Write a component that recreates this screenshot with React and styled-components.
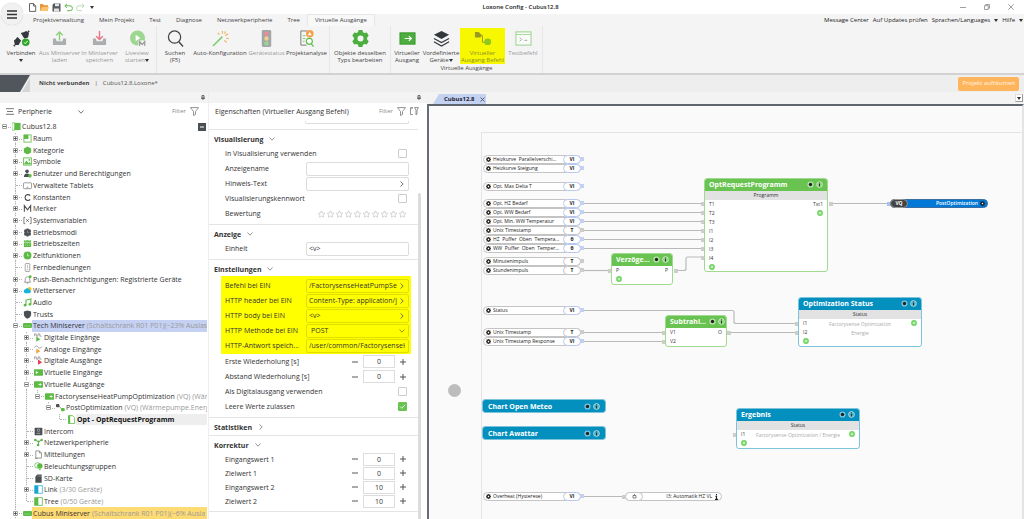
import React from "react";
import styled, { createGlobalStyle, css } from "styled-components";

const GREEN = "#69c350";
const DARK = "#4a4f54";
const BLUE = "#0490bf";

const Global = createGlobalStyle`
  * { box-sizing: border-box; }
  html, body { margin: 0; height: 100%; overflow: hidden; }
  body { font-family: "Open Sans", "Noto Sans", sans-serif; font-size: 7px; line-height: 9px; color: #333; background: #f4f4f4; }
  #root { height: 100%; }
  button, input, select { font: inherit; color: inherit; margin: 0; padding: 0; border: 0; background: none; border-radius: 0; outline: 0; }
  svg { display: block; flex: none; }
  h1, h2, h3, p, ul { margin: 0; padding: 0; font: inherit; list-style: none; }
`;

/* ---------- window frame ---------- */
const Window = styled.div`display: flex; flex-direction: column; height: 100vh;`;
const Top = styled.header`display: flex; flex: none; height: 26px; background: linear-gradient(#fff 14px, #f4f4f4 14px);`;
const MenuButton = styled.button`
  flex: none; width: 22px; height: 22px; margin: 3px 2px 0 1px; border-radius: 50%; background: #f1f1f1;
  box-shadow: 0 0 1px #bbb; display: grid; place-items: center;
`;
const TopRows = styled.div`flex: 1; display: grid; grid-template-rows: 14px 12px; min-width: 0;`;
const TitleRow = styled.div`display: grid; grid-template-columns: 1fr auto 1fr; align-items: center; font-size: 6px; padding-right: 8px;`;
const QuickBar = styled.div`display: flex; gap: 2px; padding-left: 2px;`;
const IconButton = styled.button`display: grid; place-items: center; width: 10px; height: 10px;`;
const Title = styled.h1`font-weight: 600; color: #222;`;
const WindowButtons = styled.div`display: flex; justify-content: flex-end; gap: 14px;`;
const TabRow = styled.div`display: flex; justify-content: space-between; font-size: 6px; padding: 0 1px 0 0;`;
const Tabs = styled.nav`display: flex;`;
const RibbonTab = styled.button`
  padding: 0 7px 0 8px; white-space: nowrap; color: #444;
  ${p => p.$active && css`background: #f8f8f8; border: 1px solid #e6e6e6; border-bottom: 0; padding: 0 7px;`}
`;
const HelpLinks = styled.div`display: flex; align-items: center; gap: 4px; color: #222; white-space: nowrap;`;
const MenuLink = styled.button`display: flex; align-items: center; gap: 4px; font-weight: 500;`;
const Caret = styled.span`
  display: inline-block; border: 2px solid transparent; border-top: 3px solid #333; border-bottom: 0; width: 4px; height: 3px;
`;

/* ---------- ribbon ---------- */
const Ribbon = styled.section`display: flex; flex: none; height: 49px; padding-left: 2px; background: #f4f4f4; border-bottom: 2px solid #d2d2d2;`;
const Group = styled.div`
  display: flex; flex-direction: column; border-right: 1px solid #e6e6e6; padding: 2px 1px 0; font-size: 6px; line-height: 7px;
`;
const GroupItems = styled.div`display: flex; height: 36px;`;
const GroupLabel = styled.div`text-align: center; line-height: 8px; color: #444;`;
const Tool = styled.button`
  width: ${p => p.$w}px; height: 36px; padding-top: 2px; display: flex; flex-direction: column; align-items: center; gap: 3px;
  color: #444; white-space: nowrap; line-height: 7px;
  ${p => p.$off && css`color: #999;`}
  ${p => p.$marked && css`background: #f7f700; color: #8d8f30;`}
`;

/* ---------- project bar ---------- */
const ProjectBar = styled.section`display: flex; flex: none; align-items: center; height: 17px; background: #eee; font-size: 6px; color: #555; padding-right: 5px;`;
const State = styled.strong`margin-left: 8px; color: #444;`;
const Divider = styled.span`margin: 0 5px;`;
const CleanButton = styled.button`margin-left: auto; height: 14px; padding: 0 4px; border-radius: 2px; background: #ffb55c; color: #fff6e8;`;

/* ---------- columns ---------- */
const Columns = styled.main`flex: 1; min-height: 0; display: grid; grid-template-columns: 208px 1px 218px minmax(0, 1fr);`;
const Panel = styled.section`display: flex; flex-direction: column; min-height: 0; overflow: hidden; background: #fff;`;
const Splitter = styled.div`background: #eee;`;
const PinStrip = styled.div`flex: none; height: 11px; background: #f3f3f3; display: flex; justify-content: flex-end; align-items: center; padding-right: ${p => (p.$wide ? 6 : 3)}px;`;
const PanelHead = styled.div`flex: none; height: 17px; display: flex; align-items: center; gap: 4px; padding: 0 ${p => (p.$wide ? 8 : 9)}px 0 6px;`;
const Spacer = styled.span`flex: 1;`;
const FilterText = styled.label`font-size: 6px; color: #888; display: flex; align-items: center; gap: 4px;`;
const ViewSelect = styled.button`display: flex; align-items: center; gap: 26px;`;

/* ---------- tree ---------- */
const Tree = styled.ul`flex: 1; min-height: 0; padding-top: 1px; display: grid; grid-template-rows: repeat(34, minmax(0, 1fr));`;
const TreeRow = styled.li`display: flex; align-items: stretch; white-space: nowrap; min-width: 0; padding-right: 1px;`;
const Guide = styled.span`
  flex: none; width: 11px; position: relative; display: flex; align-items: center;
  background: ${p => (p.$line ? "repeating-linear-gradient(#b5b5b5 0 1px, #e8e8e8 1px 2px) 4px 0 / 1px 100% no-repeat" : "none")};
  ${p => p.$last && css`background-size: 1px 50%;`}
`;
const Branch = styled.span`position: absolute; left: 5px; right: 0; top: 50%; border-top: 1px dotted #b5b5b5;`;
const Expander = styled.button`position: relative; width: 7px; height: 7px; margin-left: 1px; background: #fff;`;
const TreeIcon = styled.span`flex: none; width: 10px; display: grid; place-items: center;`;
const TreeLabel = styled.span`
  flex: 1; min-width: 0; overflow: hidden; display: flex; align-items: center; gap: 2px; padding-left: 1px; color: #333;
  ${p => p.$tone === "blue" && css`background: #c5d1f3;`}
  ${p => p.$tone === "amber" && css`background: #ffdb74;`}
  ${p => p.$tone === "grey" && css`background: #eee; font-weight: 700; color: #111;`}
`;
const Note = styled.span`color: #999;`;
const CollapseAll = styled.button`align-self: center; width: 8px; height: 8px; background: ${DARK}; margin-right: 1px; display: grid; place-items: center;`;

/* ---------- properties ---------- */
const PropsBody = styled.div`flex: 1; min-height: 0; overflow: hidden; display: grid; grid-template-columns: minmax(0, 1fr) 3px; padding: 1px 6px 0 0;`;
const PropsList = styled.div``;
const ScrollTrack = styled.div`padding-top: 72px; background: #fff;`;
const ScrollThumb = styled.div`height: 100%; background: #dcdcdc; border-radius: 2px 2px 0 0;`;
const CutField = styled.div`height: 3px; margin: 0 9px 5px 96px; border: 1px solid #ddd; border-top: 0; border-radius: 0 0 2px 2px;`;
const Section = styled.section`border-top: 1px solid #e4e4e4; padding: 2px 0 ${p => (p.$closed ? 1 : 3)}px;`;
const SectionHead = styled.button`display: flex; align-items: center; gap: 6px; height: 14px; padding-left: 5px; font-weight: 700; color: #333;`;
const Marked = styled.div`background: #ffff00; margin: 0 7px 0 12px; padding: 2px 0 1px;
  & > div { padding-left: 4px; padding-right: 2px; }
  input, select { color: #333; }
`;
const Row = styled.div`
  height: ${p => (p.$dense ? 14 : 15)}px; display: flex; align-items: center; padding: 0 9px 0 16px;
  & > label, & > span:first-child { flex: 1; min-width: 0; white-space: nowrap; }
`;
const Field = styled.div`
  flex: none; display: flex; align-items: center; width: 103px; height: 14px; border: 1px solid ${p => (p.$on ? "#dfe000" : "#dcdcdc")};
  border-radius: 2px; padding: 0 3px 0 2px;
`;
const TextInput = styled.input`flex: 1; min-width: 0; width: 10px; height: 10px;`;
const Choice = styled.select`flex: 1; min-width: 0; appearance: none; height: 12px; padding-left: 2px;`;
const Check = styled.input`
  appearance: none; flex: none; width: 9px; height: 9px; margin-right: 2px; border: 1px solid #ccc; border-radius: 1px; background: #fff;
  &:checked { border-color: ${GREEN}; background: ${GREEN}; }
`;
const CheckWrap = styled.span`display: grid; & > * { grid-area: 1 / 1; } svg { pointer-events: none; place-self: center; margin-right: 2px; }`;
const Stepper = styled.div`display: flex; align-items: center; gap: 4px; padding-right: 2px;`;
const NumberInput = styled.input`width: 32px; height: 13px; border: 1px solid #ddd; text-align: center;`;
const StepButton = styled.button`width: 8px; height: 10px; display: grid; place-items: center;`;
const Stars = styled.div`display: flex; padding-right: 2px;`;

/* ---------- diagram ---------- */
const Editor = styled.section`display: flex; flex-direction: column; min-width: 0; min-height: 0;`;
const EditorTabs = styled.div`flex: none; height: 12px; background: #f3f3f3; display: flex; justify-content: space-between; align-items: stretch; padding: 2px 1px 0 6px;`;
const EditorTab = styled.button`
  display: flex; align-items: center; gap: 5px; width: 53px; padding-left: 11px; font-size: 6px; font-weight: 700; color: #223;
  background: #c4d2f2; clip-path: polygon(6px 0, 100% 0, 100% 100%, 0 100%);
`;
const TabList = styled.button`width: 8px; height: 8px; border: 1px solid #999; border-top-color: #ddd; border-left-color: #ddd; display: grid; place-items: center; background: #fff;`;
const Canvas = styled.div`
  flex: 1; position: relative; overflow: hidden; background: #fafafa; border-left: 2px solid #686c76; border-top: 2px solid #60646c; border-right: 2px solid #e3e3e8;
`;
const Sheet = styled.div`position: absolute; left: 52px; top: 26px; right: 0; bottom: 0; border-left: 1px solid #e4e4e4; border-top: 1px solid #e4e4e4; font-size: 5px; line-height: 7px;`;
const Pointer = styled.div`position: absolute; left: 19px; top: 278px; width: 13px; height: 13px; border-radius: 50%; background: #bdbdbd;`;
const Wires = styled.svg`position: absolute; left: 0; top: 0; width: 100%; height: 100%; overflow: visible;`;
const Placed = styled.div`position: absolute; left: ${p => p.$x}px; top: ${p => p.$y}px; width: ${p => p.$w}px;`;
const Pill = styled(Placed)`
  height: 9px; border: 1px solid #c4c4c4; border-radius: 5px; background: #fff; display: flex; align-items: center;
  padding-left: 2px; gap: 2px; color: #222; white-space: pre;
`;
const PillText = styled.span`flex: 1; min-width: 0; text-align: ${p => p.$align || "left"};`;
const Kind = styled.span`
  flex: none; width: 18px; height: 9px; border: 1px solid ${p => (p.$blue ? "#b9c8ee" : "#c4c4c4")}; border-radius: 5px; background: #fff;
  display: grid; place-items: center; font-weight: 700; margin-right: -1px; color: #222;
`;
const OutPill = styled(Pill)`background: #0078d7; border-color: #3a6ea0; color: #fff; font-weight: 600; padding: 0 2px 0 0;`;
const OutKind = styled(Kind)`background: #444; border-color: #999; color: #fff; margin: 0 0 0 -1px;`;
const StatusPill = styled(Pill)`padding: 0 2px 0 0;`;
const StatusKind = styled(Kind)`margin: 0 0 0 -1px;`;
const Block = styled(Placed)`
  height: ${p => p.$h}px; border: 1px solid ${p => (p.$blue ? "#7cc4dc" : "#a0da90")}; border-radius: 3px; background: #fff; overflow: hidden;
`;
const BlockHead = styled.div`
  height: ${p => (p.$only ? 12 : 13)}px; margin: ${p => (p.$only ? "0" : "-1px -1px 0")}; padding: 0 5px; display: flex; align-items: center;
  justify-content: space-between; gap: 3px; background: ${p => (p.$blue ? BLUE : GREEN)}; color: #fff; font-size: 7px; font-weight: 700; white-space: nowrap;
`;
const HeadIcons = styled.span`display: flex; gap: 2px;`;
const BlockSub = styled.div`height: 9px; background: #e2e2e2; text-align: center; line-height: 9px; color: #333;`;
const Ports = styled.div`display: grid; grid-template-columns: auto 1fr auto; padding: 0 4px;`;
const PortList = styled.div`display: flex; flex-direction: column; line-height: 9px; color: #333; align-items: ${p => (p.$right ? "flex-end" : "flex-start")};`;
const Caption = styled.div`text-align: center; line-height: 9px; color: #aaa; white-space: pre-line; padding-top: 1px;`;

/* ---------- drawings ---------- */
const G = "#5cbb45";
const treeIcons = {
  project: <><rect x="0" y="1" width="3" height="8" fill="#fff" stroke={G} strokeWidth=".7" /><rect x="3" y="1" width="6.5" height="8" fill={G} /></>,
  room: <><rect x="1" y="1" width="8" height="8" fill="#fff" stroke={G} strokeWidth=".9" /><rect x="1" y="1" width="5" height="4.5" fill={G} /></>,
  category: <path d="M5 .5 9 2.8v4.4L5 9.5 1 7.2V2.8z" fill={G} />,
  symbol: <><rect x=".7" y="1" width="8.6" height="8" fill="#fff" stroke={G} /><path d="M1 8 4 4l2 3 1.5-1.5L9 8z" fill={G} /><circle cx="7" cy="3.3" r="1" fill={G} /></>,
  user: <><circle cx="4.5" cy="2.6" r="2" fill={DARK} /><path d="M1 9c0-3 1.5-4 3.5-4S8 6 8 9z" fill={DARK} /><circle cx="7.7" cy="7.6" r="2" fill={G} /></>,
  tablet: <><rect x=".5" y="2" width="9" height="6.5" rx="1" fill="#fff" stroke="#777" strokeWidth=".8" /><path d="M4 7h2" stroke="#777" strokeWidth=".8" /></>,
  constant: <path d="M8 3C6.500 1 2.300 1.300 2.300 5S6.500 9 8 7" fill="none" stroke={DARK} strokeWidth="1.300" />,
  memory: <path d="M1.500 8.500V1.800L5 6.500l3.500-4.700v6.700" fill="none" stroke={DARK} strokeWidth="1.200" />,
  sysvar: <path d="M2.500 1.500H1v7h1.500M7.500 1.500H9v7H7.500M3.500 3.500l3 3M6.500 3.500l-3 3" fill="none" stroke={DARK} strokeWidth=".8" />,
  modes: <><path d="M4 .5h2l.5 1.200 1.500-.2 1 1.700L8.300 5 9 6.800 8 8.500l-1.500-.2L6 9.500H4l-.5-1.200-1.500.2-1-1.700L1.700 5 1 3.200l1-1.700 1.500.2z" fill={DARK} /><path d="M5 3v2.200h1.500" stroke="#aaa" fill="none" strokeWidth=".7" /></>,
  calendar: <><rect x="1" y="1.500" width="8" height="7.500" rx=".5" fill={G} /><path d="M1 3.600h8M3 .6v1.600M7 .6v1.600" stroke="#fff" strokeWidth=".6" /><path d="M2.500 5.200h5M2.500 7h5" stroke="#bfe6b4" strokeWidth=".8" strokeDasharray="1 1" /></>,
  clock: <><circle cx="5" cy="5" r="4.400" fill={G} /><path d="M5 2.500V5.300h2" fill="none" stroke="#d9f3d2" strokeWidth=".8" /></>,
  remote: <><rect x="2.500" y=".6" width="5" height="8.800" rx=".8" fill="#fff" stroke="#888" strokeWidth=".8" /><path d="M5 2v4M4 7.500h2" stroke="#aaa" strokeWidth=".8" /></>,
  bell: <><path d="M1.500 8c1-1 1-2 1-3.500C2.500 3 3.500 2 5 2s2.500 1 2.500 2.500C7.500 6 7.500 7 8.500 8zM4 9h2" fill="#fff" stroke="#777" strokeWidth=".8" /><circle cx="8" cy="2" r="1.600" fill={G} /></>,
  weather: <><circle cx="7.300" cy="3.200" r="2.200" fill="#f6c324" /><path d="M2.500 8a2.200 2.200 0 0 1 0-4.300C3.500 2 6 2 6.500 4 9 4 9.500 7.500 7.500 8z" fill="#12b5dc" /></>,
  audio: <><path d="M3.300 8V2.300L8.800 1v5.800" fill="none" stroke={G} strokeWidth="1.200" /><circle cx="2.300" cy="8" r="1.500" fill={G} /><circle cx="7.700" cy="7" r="1.500" fill={G} /></>,
  trust: <path d="M5 .5 9 1.700v3C9 7.300 7 9 5 9.700 3 9 1 7.300 1 4.700v-3z" fill={DARK} />,
  server: <><rect x="0" y="2.200" width="10" height="5.600" rx="1.200" fill={G} /><path d="M1.500 5.600h7" stroke="#c3e9b9" strokeWidth=".7" strokeDasharray="1.200 .6" /></>,
  digIn: <><path d="M.5 3.500V1h2v2.500h2V1h2v2.500h2" fill="none" stroke="#777" strokeWidth=".7" /><path d="M2.500 4 7 7 2.500 9.800z" fill={G} /></>,
  anaIn: <><path d="M.5 3C2 0 3.500 1 4.500 2.500S7.500 4 9 1.500" fill="none" stroke="#777" strokeWidth=".7" /><path d="M2.500 4 7 7 2.500 9.800z" fill="#f2a33a" /></>,
  digOut: <><path d="M.5 3.500V1h2v2.500h2V1h2v2.500h2" fill="none" stroke="#777" strokeWidth=".7" /><path d="M4.500 4 9 7 4.500 9.800z" fill="#e9374a" /></>,
  virtIn: <><rect x="0" y="1.500" width="10" height="7" rx=".5" fill={G} /><path d="M2 3.200 5 5 2 6.800z" fill="#fff" /></>,
  virtOut: <><rect x="0" y="1.500" width="10" height="7" rx=".5" fill={G} /><path d="M5 5h3M6.500 3.500 8 5 6.500 6.500" fill="none" stroke="#fff" strokeWidth=".9" /></>,
  command: <><rect x="0" y="1" width="3.800" height="3.600" rx="1" fill={DARK} /><path d="M3.500 3.500 6 6.500" stroke="#777" strokeWidth=".8" /><rect x="5.500" y="5.600" width="4.200" height="3.600" rx="1.200" fill={G} /></>,
  page: <><path d="M1.700.7h4.500L8.500 3v6.500H1.700z" fill="#fff" stroke={G} strokeWidth=".9" /><path d="M1.500.5h2v9h-2z" fill={G} /></>,
  intercom: <><rect x=".7" y=".7" width="8.600" height="8.600" rx="1" fill={DARK} /><circle cx="5" cy="3.600" r="1.400" fill="none" stroke="#ccc" strokeWidth=".7" /><path d="M3 7h4" stroke="#ccc" strokeWidth=".8" /></>,
  network: <><path d="M1.500 2.500 5 4l3.500-1.500M5 4v4" fill="none" stroke={DARK} strokeWidth=".7" /><circle cx="1.500" cy="2.300" r="1.400" fill={G} /><circle cx="8.500" cy="2.300" r="1.400" fill={G} /><circle cx="4.500" cy="7.800" r="1.500" fill={G} /><circle cx="5" cy="4" r="1.300" fill={G} /></>,
  message: <path d="M2 1h4l2.300 2.300V9H2zM6 1v2.300h2.300M1 9.300h3" fill="#fff" stroke="#777" strokeWidth=".8" />,
  light: <><circle cx="3.800" cy="3.800" r="3" fill="#fff" stroke={G} strokeWidth=".8" /><circle cx="6.500" cy="4.500" r="3" fill={G} /><path d="M5.500 8.500h2" stroke={G} /></>,
  sd: <><path d="M3.500.6h5v9h-7V3z" fill={DARK} /><path d="M4.500 1.500v1.600M6 1.500v1.600M7.400 1.500v1.600" stroke="#aaa" strokeWidth=".6" /></>,
  link: <><rect x=".8" y=".8" width="8.400" height="8.400" fill="#fff" stroke="#35b2d8" strokeWidth=".9" /><rect x=".8" y=".8" width="4" height="8.400" fill="#17a6d4" /></>,
  tree: <><rect x=".8" y=".8" width="8.400" height="8.400" fill="#fff" stroke={G} strokeWidth=".9" /><rect x=".8" y=".8" width="4" height="8.400" fill={G} /></>,
};
const Pic = ({ name }) => <svg width="9" height="9" viewBox="0 0 10 10">{treeIcons[name]}</svg>;

const toolIcons = {
  connect: <><path d="M1 11l4-3 3 4-2 4H2zM10 3l4-2 3 2-1 5-4 1-2-3z" fill="#34393e" /><path d="M4 8l4 4M9 3l5 5M2 16l-1 1M16 2l1-1" stroke="#34393e" strokeWidth="2" /><circle cx="13.500" cy="13" r="4" fill="#2fa52a" /><path d="M11.600 13l1.400 1.500 2.500-3" fill="none" stroke="#fff" strokeWidth="1" /></>,
  load: <><path d="M2 9h3l1 3h6l1-3h3v6a1 1 0 0 1-1 1H3a1 1 0 0 1-1-1z" fill="#aaaeb0" /><path d="M9 11V2M5.500 5.500 9 2l3.500 3.500" fill="none" stroke="#8fd07f" strokeWidth="1.500" /></>,
  save: <><path d="M2 9h3l1 3h6l1-3h3v6a1 1 0 0 1-1 1H3a1 1 0 0 1-1-1z" fill="#aaaeb0" /><path d="M9 1v9M5.500 6.500 9 10l3.500-3.500" fill="none" stroke="#ec7483" strokeWidth="1.500" /></>,
  live: <><circle cx="9" cy="8.500" r="8" fill="#9dd690" /><path d="M7 5l5 3.500L7 12z" fill="#fff" /><path d="M10 11h8v7h-8z" fill="#f4f4f4" /><path d="M11.300 17v-5l2.700 3.500 2.700-3.500v5" fill="none" stroke="#999" strokeWidth="1.200" /></>,
  search: <><circle cx="8" cy="7.500" r="6.500" fill="none" stroke="#444" strokeWidth="1.300" /><path d="M12.500 12.500 17 17.500" stroke="#444" strokeWidth="1.500" /></>,
  wand: <><path d="M1 17 11 7" stroke="#7ccc6b" strokeWidth="1.600" /><path d="M11 1v3M14 1.500l-.5 2.500M6 3l2 2M14 6l3-2M15 9h3M13 11l2.500 2" stroke="#f0b25a" strokeWidth="1.200" /></>,
  lights: <><rect x="4" y="0" width="10" height="18" rx="1.500" fill="#a2a6a8" /><circle cx="9" cy="3.800" r="2.300" fill="#f08a93" /><circle cx="9" cy="9" r="2.300" fill="#f5cd8d" /><circle cx="9" cy="14.200" r="2.300" fill="#9ad68b" /></>,
  analysis: <><path d="M10 1H3v15h6" fill="none" stroke="#777" /><path d="M5 6h3M5 9h3M5 12h2" stroke="#7ccc6b" /><circle cx="12.500" cy="4" r="4" fill="#f5a04c" /><path d="M12.500 2 14.500 5.500h-4z" fill="#fff" /><circle cx="12" cy="12" r="3.200" fill="#fff" stroke="#5cbb45" strokeWidth="1.200" /><path d="M14 14.500l2.500 3" stroke="#5cbb45" strokeWidth="1.200" /></>,
  gear: <path fillRule="evenodd" d="M7 0h4l.7 2.400 1.600.9 2.400-.7 2 3.500L16 8v2l1.700 1.900-2 3.500-2.400-.6-1.600.9L11 18H7l-.7-2.300-1.600-.9-2.400.6-2-3.500L2 10V8L.3 6.100l2-3.500 2.400.7 1.600-.9zM9 5.800a3.200 3.200 0 1 0 0 6.400 3.200 3.200 0 0 0 0-6.400z" fill="#4cae3e" />,
  output: <><rect x="1" y="3" width="16" height="12" fill="#4cae3e" stroke="#3a9630" /><path d="M6 9h7M10.500 6.500 13 9l-2.500 2.500" fill="none" stroke="#fff" strokeWidth="1.300" /></>,
  layers: <><path d="M9 1l8 4-8 4.500L1 5z" fill="#33383d" /><path d="M1 9l8 4.300L17 9M1 12.500l8 4.500 8-4.500" fill="none" stroke="#33383d" strokeWidth="1.200" /></>,
  command: <><path d="M1 2h4l3 3-1 3H1z" fill="#999c22" /><path d="M7 6h2v7h3" fill="none" stroke="#999c22" /><rect x="11" y="9" width="7" height="7" rx="3" fill="#8fc81f" /></>,
  test: <><rect x="1" y="2" width="16" height="14" fill="#f9fcf8" stroke="#a3d798" strokeWidth="1.200" /><path d="M1 4.800h16" stroke="#a3d798" /><path d="M5 8l2 2-2 2M10 11h3" fill="none" stroke="#a3aaa3" /></>,
};

const Chevron = ({ dir = "down", color = "#666" }) => (
  <svg width="6" height="6" viewBox="0 0 6 6"><path d={dir === "down" ? "M.5 1.500 3 4.200 5.500 1.500" : "M1.500.5 4.200 3 1.500 5.500"} fill="none" stroke={color} strokeWidth=".9" /></svg>
);
const Funnel = () => <svg width="9" height="9" viewBox="0 0 9 9"><path d="M.5.6h8L5.500 4.500V7.500l-2 1v-4z" fill="none" stroke="#777" strokeWidth=".8" /></svg>;
const Pin = () => <svg width="4" height="5" viewBox="0 0 4 5"><path d="M1 .6h2v2.600H1zM0 3.300h4M2 3.300V5" fill="none" stroke="#555" strokeWidth=".9" /></svg>;
const Sign = ({ plus }) => <svg width="6" height="6" viewBox="0 0 6 6"><path d={plus ? "M0 3h6M3 0v6" : "M0 3h6"} stroke="#444" strokeWidth=".9" /></svg>;
const Star = () => <svg width="9" height="8" viewBox="0 0 9 8"><path d="M4.500.8l1 2.200 2.300.3-1.700 1.600.4 2.300-2-1.100-2 1.100.4-2.300L1.200 3.300 3.500 3z" fill="none" stroke="#bbb" strokeWidth=".6" /></svg>;
const Box = ({ plus }) => <svg width="7" height="7" viewBox="0 0 7 7"><path d="M1.500 1.500h4v4h-4z" fill="#fff" stroke="#a5a5a5" /><path d={plus ? "M2 3.500h3M3.500 2v3" : "M2 3.500h3"} stroke="#444" strokeWidth=".8" /></svg>;
const Cog = ({ color = "#222" }) => <svg width="5" height="5" viewBox="0 0 6 6"><circle cx="3" cy="3" r="1.900" fill="none" stroke={color} strokeWidth="1.500" /><path d="M3 0v6M0 3h6M.9.9l4.200 4.200M5.100.9.9 5.100" stroke={color} strokeWidth=".8" /><circle cx="3" cy="3" r=".8" fill="#fff" /></svg>;
const Plus = () => <svg width="6" height="9" viewBox="0 0 6 9"><circle cx="3" cy="4" r="2.900" fill="#6ed35e" /><path d="M1.500 4h3M3 2.500v3" stroke="#e9fbe6" strokeWidth=".8" /></svg>;
const HeadPics = ({ blue }) => (
  <HeadIcons>
    <svg width="7" height="7" viewBox="0 0 7 7"><circle cx="3.500" cy="3.500" r="3.100" fill={blue ? "#7cc4dc" : "#b5e3aa"} /><circle cx="3.500" cy="3.500" r="1.700" fill="#222" /></svg>
    <svg width="7" height="7" viewBox="0 0 7 7"><circle cx="3.500" cy="3.500" r="2.900" fill={blue ? "#4aabcb" : "#8ed07d"} stroke="#d8efe0" strokeWidth=".7" /><path d="M3.500 1.500v.9M3.500 3v2.500" stroke="#222" strokeWidth=".9" /></svg>
  </HeadIcons>
);

/* ---------- data ---------- */
const groups = [
  { items: [
    [36, "connect", "Verbinden", "", { caret: true }],
    [41, "load", "Aus Miniserver", "laden", { off: true }],
    [39, "save", "In Miniserver", "speichern", { off: true }],
    [36, "live", "Liveview", "starten", { off: true, caret: true }],
  ] },
  { items: [
    [34, "search", "Suchen", "(F5)", {}],
    [56, "wand", "Auto-Konfiguration", "", {}],
    [37, "lights", "Gerätestatus", "", { off: true }],
    [43, "analysis", "Projektanalyse", "", {}],
  ] },
  { items: [[58, "gear", "Objekte desselben", "Typs bearbeiten", {}]] },
  { label: "Virtuelle Ausgänge", items: [
    [30, "output", "Virtueller", "Ausgang", {}],
    [38, "layers", "Vordefinierte", "Geräte", { caret: true }],
    [45, "command", "Virtueller", "Ausgang Befehl", { marked: true }],
    [36, "test", "Testbefehl", "", { off: true }],
  ] },
];

// depth, icon, label, expander state ("+", "-" or none), extras
const nodes = [
  [0, "project", "Cubus12.8", "-", { collapse: true }],
  [1, "room", "Raum", "+"],
  [1, "category", "Kategorie", "+"],
  [1, "symbol", "Symbole", "+"],
  [1, "user", "Benutzer und Berechtigungen", "+"],
  [1, "tablet", "Verwaltete Tablets", ""],
  [1, "constant", "Konstanten", "+"],
  [1, "memory", "Merker", "+"],
  [1, "sysvar", "Systemvariablen", "+"],
  [1, "modes", "Betriebsmodi", "+"],
  [1, "calendar", "Betriebszeiten", "+"],
  [1, "clock", "Zeitfunktionen", "+"],
  [1, "remote", "Fernbedienungen", ""],
  [1, "bell", "Push-Benachrichtigungen: Registrierte Geräte", "+"],
  [1, "weather", "Wetterserver", "+"],
  [1, "audio", "Audio", ""],
  [1, "trust", "Trusts", ""],
  [1, "server", "Tech Miniserver", "-", { note: "(Schaltschrank R01 P01)(~23% Auslas", tone: "blue" }],
  [2, "digIn", "Digitale Eingänge", "+"],
  [2, "anaIn", "Analoge Eingänge", "+"],
  [2, "digOut", "Digitale Ausgänge", "+"],
  [2, "virtIn", "Virtuelle Eingänge", "+"],
  [2, "virtOut", "Virtuelle Ausgänge", "-"],
  [3, "virtOut", "FactorysenseHeatPumpOptimization", "-", { note: "(VQ) (Wär", last: true }],
  [4, "command", "PostOptimization", "-", { note: "(VQ) (Wärmepumpe.Energ", last: true }],
  [5, "page", "Opt - OptRequestProgramm", "", { tone: "grey", last: true }],
  [2, "intercom", "Intercom", ""],
  [2, "network", "Netzwerkperipherie", "+"],
  [2, "message", "Mitteilungen", "+"],
  [2, "light", "Beleuchtungsgruppen", ""],
  [2, "sd", "SD-Karte", ""],
  [2, "link", "Link", "+", { note: "(3/30 Geräte)" }],
  [2, "tree", "Tree", "", { note: "(0/50 Geräte)", last: true }],
  [1, "server", "Cubus Miniserver", "+", { note: "(Schaltschrank R01 P01)(~6% Ausla", tone: "amber" }],
];

const inputs = [
  [22, "Heizkurve  Parallelverschi...", "VI"],
  [31, "Heizkurve Steigung", "VI"],
  [49, "Opt. Max Delta T", "VI"],
  [66, "Opt. HZ Bedarf", "VI"],
  [75, "Opt. WW Bedarf", "VI"],
  [84, "Opt. Min. WW Temperatur", "VI"],
  [93, "Unix Timestamp", "T"],
  [102, "HZ  Puffer  Oben  Tempera...", "θ"],
  [111, "WW  Puffer  Oben  Temper...", "θ"],
  [124, "Minutenimpuls", "T"],
  [133, "Stundenimpuls", "T"],
  [173, "Status", "VI"],
  [195, "Unix Timestamp", "T"],
  [204, "Unix Timestamp Response", "VI"],
  [359, "Overheat (Hysterese)", "VI"],
];
const wires = [
  "M102 70.500H221", "M102 79.500H221", "M102 88.500H221", "M102 97.500H221", "M102 106.500H221", "M102 115.500H221",
  "M102 137.500H128", "M193 137.500H202q2 0 2-2V126q0-2 2-2H221", "M350 70.500H406",
  "M102 177.500H250q2 0 2 2V188.500q0 2 2 2H315", "M102 199.500H182", "M102 208.500H182", "M247 199.500H315", "M102 363.500H140",
];
const greyPorts = [
  ...[69, 78, 87, 96, 105, 114, 123].map(y => [219, y]), [347, 69], [126, 136], [192, 136], [180, 198], [180, 207], [245, 198],
  [313, 189], [313, 198], [251, 300], [140, 362],
];

/* ---------- views ---------- */
function RibbonView() {
  return (
    <Ribbon>
      {groups.map((g, i) => (
        <Group key={i}>
          <GroupItems>
            {g.items.map(([w, icon, a, b, o]) => (
              <Tool key={icon} $w={w} $off={o.off} $marked={o.marked}>
                <svg width="17" height="17" viewBox="0 0 18 18">{toolIcons[icon]}</svg>
                <span>{a}<br />{b}{o.caret && <Caret />}</span>
              </Tool>
            ))}
          </GroupItems>
          {g.label && <GroupLabel>{g.label}</GroupLabel>}
        </Group>
      ))}
    </Ribbon>
  );
}

function TreeView() {
  return (
    <Tree>
      {nodes.map(([depth, icon, label, exp, o = {}], i) => (
        <TreeRow key={i}>
          {Array.from({ length: depth }, (_, c) => <Guide key={c} $line={c === 1 || c === 2} />)}
          <Guide $line={depth > 0} $last={o.last}>
            <Branch />
            {exp && <Expander aria-label={label}><Box plus={exp === "+"} /></Expander>}
          </Guide>
          <TreeIcon><Pic name={icon} /></TreeIcon>
          <TreeLabel $tone={o.tone}>{label}{o.note && <Note>{o.note}</Note>}</TreeLabel>
          {o.collapse && <CollapseAll aria-label="Alle einklappen"><svg width="4" height="4" viewBox="0 0 4 4"><path d="M0 2h4" stroke="#fff" /></svg></CollapseAll>}
        </TreeRow>
      ))}
    </Tree>
  );
}

const FieldRow = ({ id, label, value = "", arrow, on }) => (
  <Row><label htmlFor={id}>{label}</label>
    <Field $on={on}><TextInput id={id} defaultValue={value} />{arrow && <button aria-label={label}><Chevron dir="right" /></button>}</Field>
  </Row>
);
const CheckRow = ({ id, label, checked }) => (
  <Row><label htmlFor={id}>{label}</label>
    <CheckWrap><Check type="checkbox" id={id} defaultChecked={checked} />
      {checked && <svg width="7" height="7" viewBox="0 0 7 7"><path d="M1 3.500 2.800 5.300 6 1.800" fill="none" stroke="#fff" strokeWidth=".8" /></svg>}
    </CheckWrap>
  </Row>
);
const StepRow = ({ id, label, value, dense }) => (
  <Row $dense={dense}><label htmlFor={id}>{label}</label>
    <Stepper>
      <StepButton aria-label="weniger"><Sign /></StepButton>
      <NumberInput id={id} defaultValue={value} />
      <StepButton aria-label="mehr"><Sign plus /></StepButton>
    </Stepper>
  </Row>
);
const Head = ({ children, closed }) => <SectionHead>{children}<Chevron dir={closed ? "right" : "down"} color="#888" /></SectionHead>;

function Properties() {
  return (
    <PropsBody>
      <PropsList>
        <CutField />
        <Section>
          <Head>Visualisierung</Head>
          <CheckRow id="vis" label="In Visualisierung verwenden" />
          <FieldRow id="name" label="Anzeigename" />
          <FieldRow id="hint" label="Hinweis-Text" arrow />
          <CheckRow id="pw" label="Visualisierungskennwort" />
          <Row><span>Bewertung</span><Stars>{Array.from({ length: 10 }, (_, i) => <Star key={i} />)}</Stars></Row>
        </Section>
        <Section>
          <Head>Anzeige</Head>
          <FieldRow id="unit" label="Einheit" value="<v>" />
        </Section>
        <Section>
          <Head>Einstellungen</Head>
          <Marked>
            <FieldRow on id="cmd" label="Befehl bei EIN" value="/FactorysenseHeatPumpSe" arrow />
            <FieldRow on id="header" label="HTTP header bei EIN" value="Content-Type: application/j" arrow />
            <FieldRow on id="body" label="HTTP body bei EIN" value="<v>" arrow />
            <Row><label htmlFor="method">HTTP Methode bei EIN</label>
              <Field $on><Choice id="method"><option>POST</option></Choice><Chevron color="#888800" /></Field>
            </Row>
            <FieldRow on id="answer" label="HTTP-Antwort speich..." value="/user/common/FactorysenseH" />
          </Marked>
          <StepRow id="first" label="Erste Wiederholung [s]" value="0" />
          <StepRow id="gap" label="Abstand Wiederholung [s]" value="0" />
          <CheckRow id="digital" label="Als Digitalausgang verwenden" />
          <CheckRow id="empty" label="Leere Werte zulassen" checked />
        </Section>
        <Section $closed><Head closed>Statistiken</Head></Section>
        <Section>
          <Head>Korrektur</Head>
          <StepRow dense id="in1" label="Eingangswert 1" value="0" />
          <StepRow dense id="out1" label="Zielwert 1" value="0" />
          <StepRow dense id="in2" label="Eingangswert 2" value="10" />
          <StepRow dense id="out2" label="Zielwert 2" value="10" />
        </Section>
        <Section />
      </PropsList>
      <ScrollTrack><ScrollThumb /></ScrollTrack>
    </PropsBody>
  );
}

function FunctionBlock({ x, y, w, h, blue, title, sub, left = [], right = [], caption }) {
  return (
    <Block $x={x} $y={y} $w={w} $h={h} $blue={blue}>
      <BlockHead $blue={blue} $only={!left.length}><span>{title}</span><HeadPics blue={blue} /></BlockHead>
      {sub && <BlockSub>{sub}</BlockSub>}
      {left.length > 0 && (
        <Ports>
          <PortList>{left.map(t => (t === "+" ? <Plus key={t} /> : <span key={t}>{t}</span>))}</PortList>
          <Caption>{caption}</Caption>
          <PortList $right>{right.map(t => (t === "+" ? <Plus key={t} /> : <span key={t}>{t}</span>))}</PortList>
        </Ports>
      )}
    </Block>
  );
}

function Diagram() {
  return (
    <Canvas>
      <Pointer />
      <Sheet>
        <Wires>
          {wires.map(d => <path key={d} d={d} fill="none" stroke="#b9b9b9" strokeWidth="1.200" />)}
          {greyPorts.map(([x, y]) => <rect key={`${x}-${y}`} x={x} y={y} width="4" height="4" fill="#cfcdc8" />)}
          {inputs.map(([y, , kind]) => <rect key={y} x="98" y={y + 2} width="4" height="4" fill={kind === "T" ? "#cfcdc8" : "#c3d1f4"} />)}
          <rect x="405" y="69" width="4" height="4" fill="#a9c3f0" />
        </Wires>
        {inputs.map(([y, text, kind]) => (
          <Pill key={y} $x={1} $y={y} $w={98}><Cog /><PillText>{text}</PillText><Kind $blue={kind !== "T"}>{kind}</Kind></Pill>
        ))}
        <FunctionBlock x={222} y={45} w={124} h={94} title="OptRequestProgramm" sub="Programm"
          left={["T1", "T2", "T3", "I1", "I2", "I3", "I4", "+"]} right={["Txt1", "+"]} />
        <FunctionBlock x={129} y={120} w={62} h={32} title="Verzöge..." left={["P", "+"]} right={["P"]} />
        <FunctionBlock x={183} y={182} w={62} h={32} title="Subtrahi..." left={["V1", "V2"]} right={["O"]} />
        <FunctionBlock blue x={316} y={164} w={124} h={50} title="Optimization Status" sub="Status"
          left={["I1", "I2", "+"]} right={["+"]} caption={"Factorysense Optimization\nEnergie"} />
        <FunctionBlock blue x={0} y={266} w={124} h={14} title="Chart Open Meteo" />
        <FunctionBlock blue x={0} y={293} w={124} h={14} title="Chart Awattar" />
        <FunctionBlock blue x={254} y={275} w={124} h={41} title="Ergebnis" sub="Status"
          left={["I1", "+"]} right={["+"]} caption="Factorysense Optimization / Energie" />
        <OutPill $x={408} $y={66} $w={98}><OutKind>VQ</OutKind><PillText $align="right">PostOptimization</PillText><Cog /></OutPill>
        <StatusPill $x={143} $y={359} $w={97}>
          <StatusKind><svg width="5" height="5" viewBox="0 0 5 5"><path d="M1 1.500h3v2.500H1zM2.500 1.500V0" fill="none" stroke="#555" strokeWidth=".7" /></svg></StatusKind>
          <PillText $align="right">I3: Automatik HZ VL</PillText>
          <svg width="5" height="6" viewBox="0 0 5 6"><path d="M2.500 0v1.300M1.500 2.400h1v3M1 5.400h3" fill="none" stroke="#222" strokeWidth="1.100" /></svg>
        </StatusPill>
      </Sheet>
    </Canvas>
  );
}

export default function App() {
  return (
    <Window>
      <Global />
      <Top>
        <MenuButton aria-label="Menü"><svg width="10" height="9" viewBox="0 0 10 9"><path d="M0 1h10M0 4.500h10M0 8h10" stroke="#333" strokeWidth="1.300" /></svg></MenuButton>
        <TopRows>
          <TitleRow>
            <QuickBar>
              <IconButton aria-label="Neu"><svg width="9" height="9" viewBox="0 0 9 9"><path d="M1.500.6h4L7.700 3v5.400H1.500zM5.500.6V3h2.200" fill="none" stroke="#555" strokeWidth=".9" /></svg></IconButton>
              <IconButton aria-label="Öffnen"><svg width="9" height="9" viewBox="0 0 9 9"><path d="M0 1h3l1 1.300h4V8H0z" fill="#e8973a" /><path d="M2 4h7L7.500 8H0z" fill="#fbc46f" /></svg></IconButton>
              <IconButton aria-label="Speichern"><svg width="9" height="9" viewBox="0 0 9 9"><path d="M1.500.5h7v8h-8V2z" fill="#555a5f" /><path d="M3 .8h4v2.500H3zM2 5.500h5v3H2z" fill="#e4e4e4" /></svg></IconButton>
              <IconButton aria-label="Rückgängig"><svg width="9" height="9" viewBox="0 0 9 9"><path d="M3 .8.8 2.800 3 5M1 2.800h5a2.400 2.400 0 0 1 0 4.900H3" fill="none" stroke="#69b858" strokeWidth="1" /></svg></IconButton>
              <IconButton aria-label="Wiederholen"><svg width="9" height="9" viewBox="0 0 9 9"><path d="M6 .8l2.200 2L6 5M8 2.800H3a2.400 2.400 0 0 0 0 4.900h3" fill="none" stroke="#b9dfb0" strokeWidth="1" /></svg></IconButton>
              <IconButton aria-label="Mehr"><Caret /></IconButton>
            </QuickBar>
            <Title>Loxone Config - Cubus12.8</Title>
            <WindowButtons>
              <IconButton aria-label="Minimieren"><svg width="6" height="6" viewBox="0 0 6 6"><path d="M0 3.500h6" stroke="#888" strokeWidth=".8" /></svg></IconButton>
              <IconButton aria-label="Verkleinern"><svg width="6" height="6" viewBox="0 0 6 6"><path d="M.5 1.700h3.800v3.800H.5zM1.700 1.500V.5h3.800v3.800h-1" fill="none" stroke="#888" strokeWidth=".8" /></svg></IconButton>
              <IconButton aria-label="Schließen"><svg width="6" height="6" viewBox="0 0 6 6"><path d="M.3.3l5.400 5.400M5.700.3.3 5.700" stroke="#888" strokeWidth=".8" /></svg></IconButton>
            </WindowButtons>
          </TitleRow>
          <TabRow>
            <Tabs>
              {["Projektverwaltung", "Mein Projekt", "Test", "Diagnose", "Netzwerkperipherie", "Tree", "Virtuelle Ausgänge"].map((t, i) => (
                <RibbonTab key={t} $active={i === 6}>{t}</RibbonTab>
              ))}
            </Tabs>
            <HelpLinks>
              <MenuLink>Message Center</MenuLink>
              <MenuLink>Auf Updates prüfen</MenuLink>
              <MenuLink>Sprachen/Languages <Caret /></MenuLink>
              <MenuLink>Hilfe <Caret /></MenuLink>
            </HelpLinks>
          </TabRow>
        </TopRows>
      </Top>
      <RibbonView />
      <ProjectBar>
        <svg width="31" height="17" viewBox="0 0 31 17"><path d="M22 17 30 3v14z" fill="#d5d5d5" /><path d="M0 0h30L20 17H0z" fill="#50565b" /></svg>
        <State>Nicht verbunden</State><Divider>|</Divider><span>Cubus12.8.Loxone*</span>
        <CleanButton>Projekt aufräumen</CleanButton>
      </ProjectBar>
      <Columns>
        <Panel>
          <PinStrip><Pin /></PinStrip>
          <PanelHead>
            <svg width="8" height="7" viewBox="0 0 8 7"><path d="M0 .7h8M1 3.500h6M0 6.300h8" stroke="#555" strokeWidth=".8" /></svg>
            <ViewSelect>Peripherie <Chevron /></ViewSelect>
            <Spacer />
            <FilterText>Filter <Funnel /></FilterText>
          </PanelHead>
          <TreeView />
        </Panel>
        <Splitter />
        <Panel>
          <PinStrip $wide><Pin /></PinStrip>
          <PanelHead $wide>
            <h2>Eigenschaften (Virtueller Ausgang Befehl)</h2>
            <Spacer />
            <FilterText>Filter <Funnel /></FilterText>
            <svg width="9" height="9" viewBox="0 0 9 9"><path d="M3 .6H.5v7H3M4.500.6h4L7 3v4l-1 1V3zM2 .6v1.500" fill="none" stroke="#777" strokeWidth=".8" /></svg>
          </PanelHead>
          <Properties />
        </Panel>
        <Editor>
          <EditorTabs>
            <EditorTab>Cubus12.8 <svg width="5" height="5" viewBox="0 0 5 5"><path d="M.5.5l4 4M4.500.5l-4 4" stroke="#445" strokeWidth=".8" /></svg></EditorTab>
            <TabList aria-label="Seiten"><Caret /></TabList>
          </EditorTabs>
          <Diagram />
        </Editor>
      </Columns>
    </Window>
  );
}
